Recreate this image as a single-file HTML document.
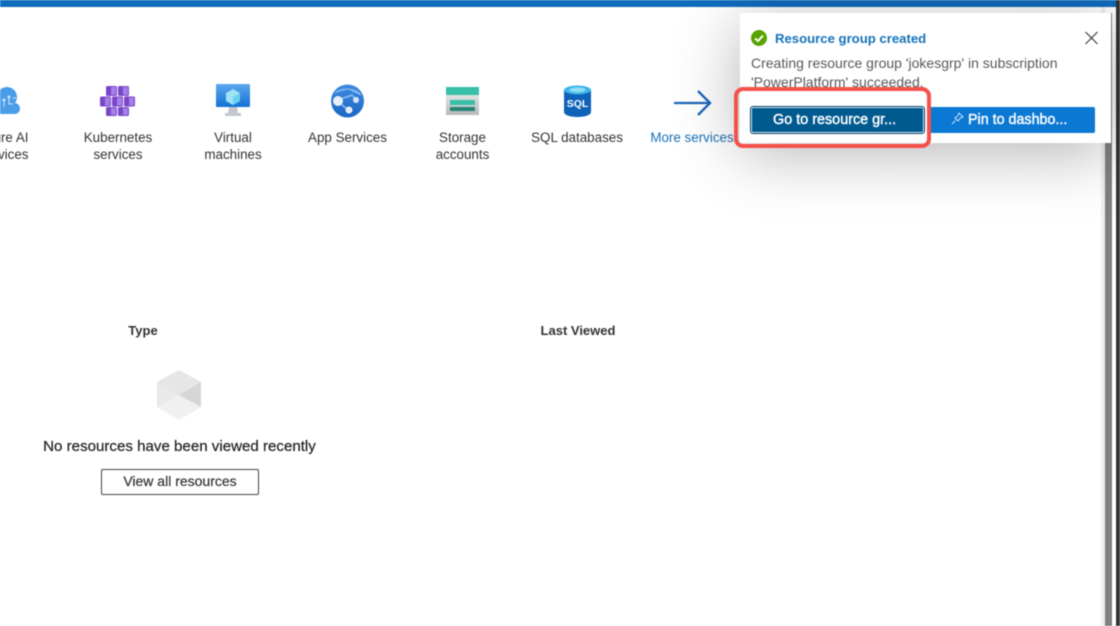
<!DOCTYPE html>
<html><head><meta charset="utf-8"><style>
html,body{margin:0;padding:0;width:1120px;height:626px;overflow:hidden;background:#fff}
body{position:relative;font-family:"Liberation Sans",sans-serif;color:#333}
#w{position:absolute;left:0;top:0;width:1120px;height:626px;filter:blur(.45px)}
.t{position:absolute;white-space:nowrap;font-size:13.400px;line-height:17.500px;transform:translateX(-50%);text-align:center}
.l{margin-top:1px}
.a{position:absolute}
</style></head><body><div id="w">
<div class="a" style="left:0;top:0;width:1116px;height:7px;background:#0f6cbd"></div>
<div class="a" style="left:1101px;top:7px;width:4px;height:619px;background:#eee"></div>
<div class="a" style="left:1105px;top:13px;width:7px;height:613px;background:#808080"></div>
<div class="a" style="left:1116px;top:0;width:4px;height:626px;background:#333"></div>

<svg class="a" style="left:0;top:86px" width="22" height="30" viewBox="0 0 22 30"><path d="M-6 28H14a5.500 5.500 0 0 0 1-11A10 10 0 0 0 -1 5C-10 9-10 28-6 28Z" fill="#4a9de8"/><path d="M4 15v6M9 12v6h4M13 12h3" stroke="#cfe6fa" fill="none"/><circle cx="4" cy="14" r="1.500" fill="#cfe6fa"/><circle cx="9" cy="11" r="1.500" fill="#cfe6fa"/></svg>
<div class="t" style="left:11px;top:128.500px">ure AI<br>rvices</div>

<svg class="a" style="left:100px;top:85px" width="35" height="32" viewBox="0 0 35 32"><g fill="#7a46c8"><rect x="6" y="1" width="11" height="10" rx="1.500"/><rect x="18" y="1" width="11" height="10" rx="1.500"/><rect x="0" y="11.500" width="11" height="10" rx="1.500"/><rect x="12" y="11.500" width="11" height="10" rx="1.500"/><rect x="24" y="11.500" width="11" height="10" rx="1.500"/><rect x="6" y="22" width="11" height="9" rx="1.500"/><rect x="18" y="22" width="11" height="9" rx="1.500"/></g><g fill="#a57ee6"><rect x="11" y="2" width="5" height="8"/><rect x="23" y="2" width="5" height="8"/><rect x="5" y="12.500" width="5" height="8"/><rect x="17" y="12.500" width="5" height="8"/><rect x="29" y="12.500" width="5" height="8"/><rect x="11" y="23" width="5" height="7"/><rect x="23" y="23" width="5" height="7"/></g></svg>
<div class="t" style="left:118px;top:128.500px">Kubernetes<br>services</div>

<svg class="a" style="left:216px;top:84px" width="35" height="33" viewBox="0 0 35 33"><defs><linearGradient id="g" x1="0" y1="0" x2="0" y2="1"><stop offset="0" stop-color="#5ea7ee"/><stop offset="1" stop-color="#1272d3"/></linearGradient></defs><rect x="0" y="0" width="34" height="23" rx="1" fill="url(#g)"/><path d="M13 23h8l1 6h3v3H9v-3h3z" fill="#c4c8cc"/><path d="M17 5l7 4v8l-7 4-7-4V9z" fill="#9ee3f5"/><path d="M17 13l7-4v8l-7 4z" fill="#6ad0ee"/></svg>
<div class="t" style="left:233px;top:128.500px">Virtual<br>machines</div>

<svg class="a" style="left:331px;top:84px" width="33" height="34" viewBox="0 0 33 34"><defs><linearGradient id="h" x1="0" y1="0" x2="0" y2="1"><stop offset="0" stop-color="#3c8be0"/><stop offset="1" stop-color="#1a66c4"/></linearGradient></defs><circle cx="16.500" cy="17" r="16.500" fill="url(#h)"/><path d="M4 9C12 3 24 4 30 11L18 5" fill="#74aeea" stroke="#8fbff0"/><path d="M9 15L22 11M10 20L18 27M22 12L25 16" stroke="#8fbff0" stroke-width="1.500"/><circle cx="7" cy="17" r="5" fill="#e8eef7"/><circle cx="18" cy="26" r="3.500" fill="#e8eef7"/><circle cx="25" cy="16" r="3" fill="#d6e4f5"/></svg>
<div class="t" style="left:347.500px;top:128.500px">App Services</div>

<svg class="a" style="left:446px;top:87px" width="33" height="28" viewBox="0 0 33 28"><defs><linearGradient id="s" x1="0" y1="0" x2="0" y2="1"><stop offset="0" stop-color="#f1f2f3"/><stop offset="1" stop-color="#b5b8ba"/></linearGradient></defs><rect width="33" height="27" y="1" fill="url(#s)"/><rect width="33" height="8" fill="#37bfa7"/><rect x="4" y="13" width="25" height="5" fill="#37bfa7"/><rect x="4" y="20" width="25" height="4" fill="#258277"/></svg>
<div class="t" style="left:462.500px;top:128.500px">Storage<br>accounts</div>

<svg class="a" style="left:564px;top:85px" width="27" height="32" viewBox="0 0 27 32"><path d="M0 5V27c0 3 6 5 13.500 5S27 30 27 27V5z" fill="#0e62b8"/><ellipse cx="13.500" cy="5" rx="13.500" ry="4.500" fill="#3fb4e8"/><ellipse cx="13.500" cy="5" rx="8" ry="2.500" fill="#8fdcf5"/><text x="13.500" y="22" font-family="Liberation Sans" font-size="10.500" font-weight="bold" fill="#fff" text-anchor="middle">SQL</text></svg>
<div class="t" style="left:577px;top:128.500px">SQL databases</div>

<svg class="a" style="left:673px;top:89px" width="39" height="28" viewBox="0 0 39 28"><path d="M1 14H37M25 2L37 14L25 26" fill="none" stroke="#1b66bd" stroke-width="2.300"/></svg>
<div class="t" style="left:692px;top:128.500px;color:#1a72b8">More services</div>

<div class="t" style="left:143px;top:322px;font-weight:bold;font-size:13px">Type</div>
<div class="t" style="left:578px;top:322px;font-weight:bold;font-size:13px">Last Viewed</div>

<svg class="a" style="left:156px;top:369px" width="46" height="52" viewBox="0 0 46 52"><path d="M23 1L45 13V38L23 51L1 38V13Z" fill="#e9e9e9"/><path d="M23 1L45 13L23 26L1 13Z" fill="#e6e6e6"/><path d="M45 13V38L23 26Z" fill="#d6d6d6"/><path d="M1 38L23 26L45 38L23 51Z" fill="#f0f0f0"/></svg>
<div class="t" style="left:179.500px;top:438px;font-size:15.100px;color:#222;-webkit-text-stroke:.2px #222">No resources have been viewed recently</div>
<div class="a" style="left:101px;top:469px;width:156px;height:24px;border:1px solid #444;border-radius:2px;text-align:center;line-height:23px;font-size:14px;-webkit-text-stroke:.2px #333">View all resources</div>

<div class="a" style="left:740px;top:13px;width:371px;height:130px;background:#fff;box-shadow:0 10px 65px rgba(0,0,0,.3)"></div>
<svg class="a" style="left:751px;top:30px" width="16" height="16" viewBox="0 0 16 16"><circle cx="8" cy="8" r="8" fill="#57a300"/><path d="M4 8.500L7 11L12 5.500" fill="none" stroke="#fff" stroke-width="2"/></svg>
<div class="a" style="left:775px;top:30px;font-size:13.150px;line-height:18px;font-weight:bold;color:#1672b8;white-space:nowrap">Resource group created</div>
<svg class="a" style="left:1085px;top:31px" width="13" height="14" viewBox="0 0 13 14"><path d="M.5 1L12.500 13M12.500 1L.5 13" stroke="#333" stroke-width="1.100" fill="none"/></svg>
<div class="a" style="left:751px;top:54px;font-size:14px;line-height:19px;color:#595959;white-space:nowrap">Creating resource group 'jokesgrp' in subscription<br>'PowerPlatform' succeeded.</div>

<div class="a" style="left:930px;top:107px;width:165px;height:26px;background:#0b78d4;border-radius:2px;color:#fff;font-size:14.300px;line-height:27px;-webkit-text-stroke:.4px #fff"><span class="a" style="left:38px;top:0;white-space:nowrap">Pin to dashbo...</span><svg class="a" style="left:21px;top:5px" width="13" height="13" viewBox="0 0 13 13"><path d="M8 1L12 5L9.500 6L7 9L4 6L7 3.500ZM4.500 8.500L1 12" fill="none" stroke="#fff" stroke-width=".8"/></svg></div>
<div class="a" style="left:751px;top:107px;width:173px;height:26px;box-sizing:border-box;background:#005a8f;border-radius:2px;outline:1px solid #003f66;border:1px solid #dfeaf2;color:#fff;font-size:14.400px;line-height:25px;-webkit-text-stroke:.4px #fff"><span class="a" style="left:21px;top:0;white-space:nowrap">Go to resource gr...</span></div>
<div class="a" style="left:734px;top:87px;width:197px;height:61px;box-sizing:border-box;border:4px solid #f4514a;border-radius:9px"></div>
</div></body></html>
